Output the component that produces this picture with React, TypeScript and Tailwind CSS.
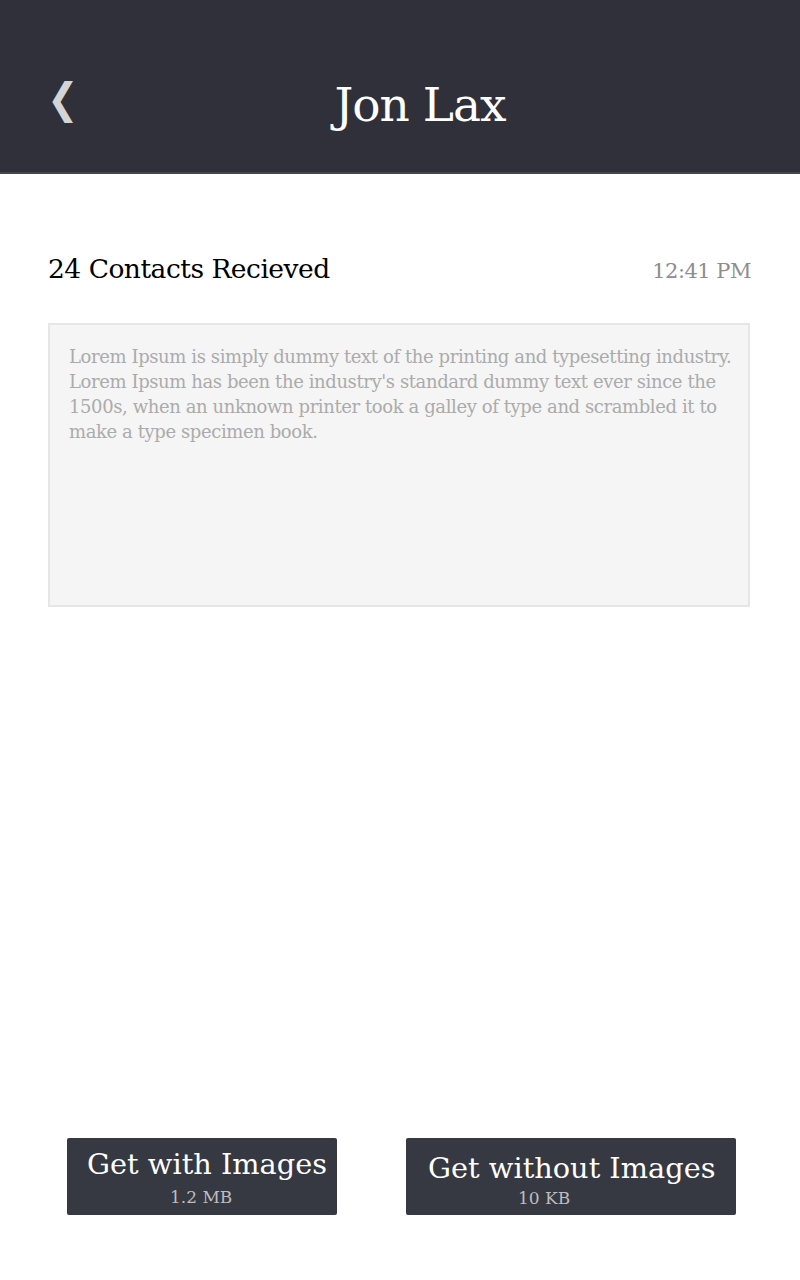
const font = { fontFamily: '"DejaVu Serif", "Liberation Serif", serif' };

const App = () => {
    return (
        <div className="min-h-screen flex flex-col bg-white" style={font}>
            {/* header */}
            <div className="h-[174px] bg-[#2f3039] border-b-2 border-[#45464d] flex items-center relative">
                <span className="absolute left-[45px] top-[78px] text-[42px] leading-none text-[#d4d4d4] scale-x-90">❮</span>
                <h1 className="w-full text-center pl-[40px] text-[47px] text-white tracking-[-1px] pt-[38px]">Jon Lax</h1>
            </div>

            <div className="pl-12 pr-[50px]">
                <div className="flex justify-between items-baseline mt-[75px]">
                    <h2 className="text-[26.5px] text-black tracking-[-0.5px]">24 Contacts Recieved</h2>
                    <span className="text-[21px] text-[#8e8e8e] tracking-[-0.5px] -mr-[1px]">12:41 PM</span>
                </div>

                <div className="mt-[34px] h-[284px] bg-[#f5f5f5] border-2 border-[#e6e6e6] pl-[19px] pr-[10px] pt-[19px]">
                    <p className="text-[18px] leading-[25px] text-[#ababab] tracking-[-0.4px]">
                        Lorem Ipsum is simply dummy text of the printing and typesetting industry. Lorem Ipsum has been the industry's standard dummy text ever since the 1500s, when an unknown printer took a galley of type and scrambled it to make a type specimen book.
                    </p>
                </div>
            </div>

            <div className="mt-auto pb-[65px] pl-[67px] flex gap-[69px]">
                <button className="w-[270px] h-[77px] bg-[#363842] rounded-[2px] flex flex-col items-start">
                    <span className="pl-[20px] pt-[8px] text-[28.8px] leading-[36px] text-white">Get with Images</span>
                    <span className="pl-[103px] pt-[5px] text-[17px] leading-[20px] text-[#bdbdbd]">1.2 MB</span>
                </button>
                <button className="w-[330px] h-[77px] bg-[#363842] rounded-[2px] flex flex-col items-start">
                    <span className="pl-[22px] pt-[12px] text-[28.8px] leading-[36px] text-white">Get without Images</span>
                    <span className="pl-[112px] pt-[3px] text-[17px] leading-[18px] text-[#bdbdbd]">10 KB</span>
                </button>
            </div>
        </div>
    );
};

export default App;
